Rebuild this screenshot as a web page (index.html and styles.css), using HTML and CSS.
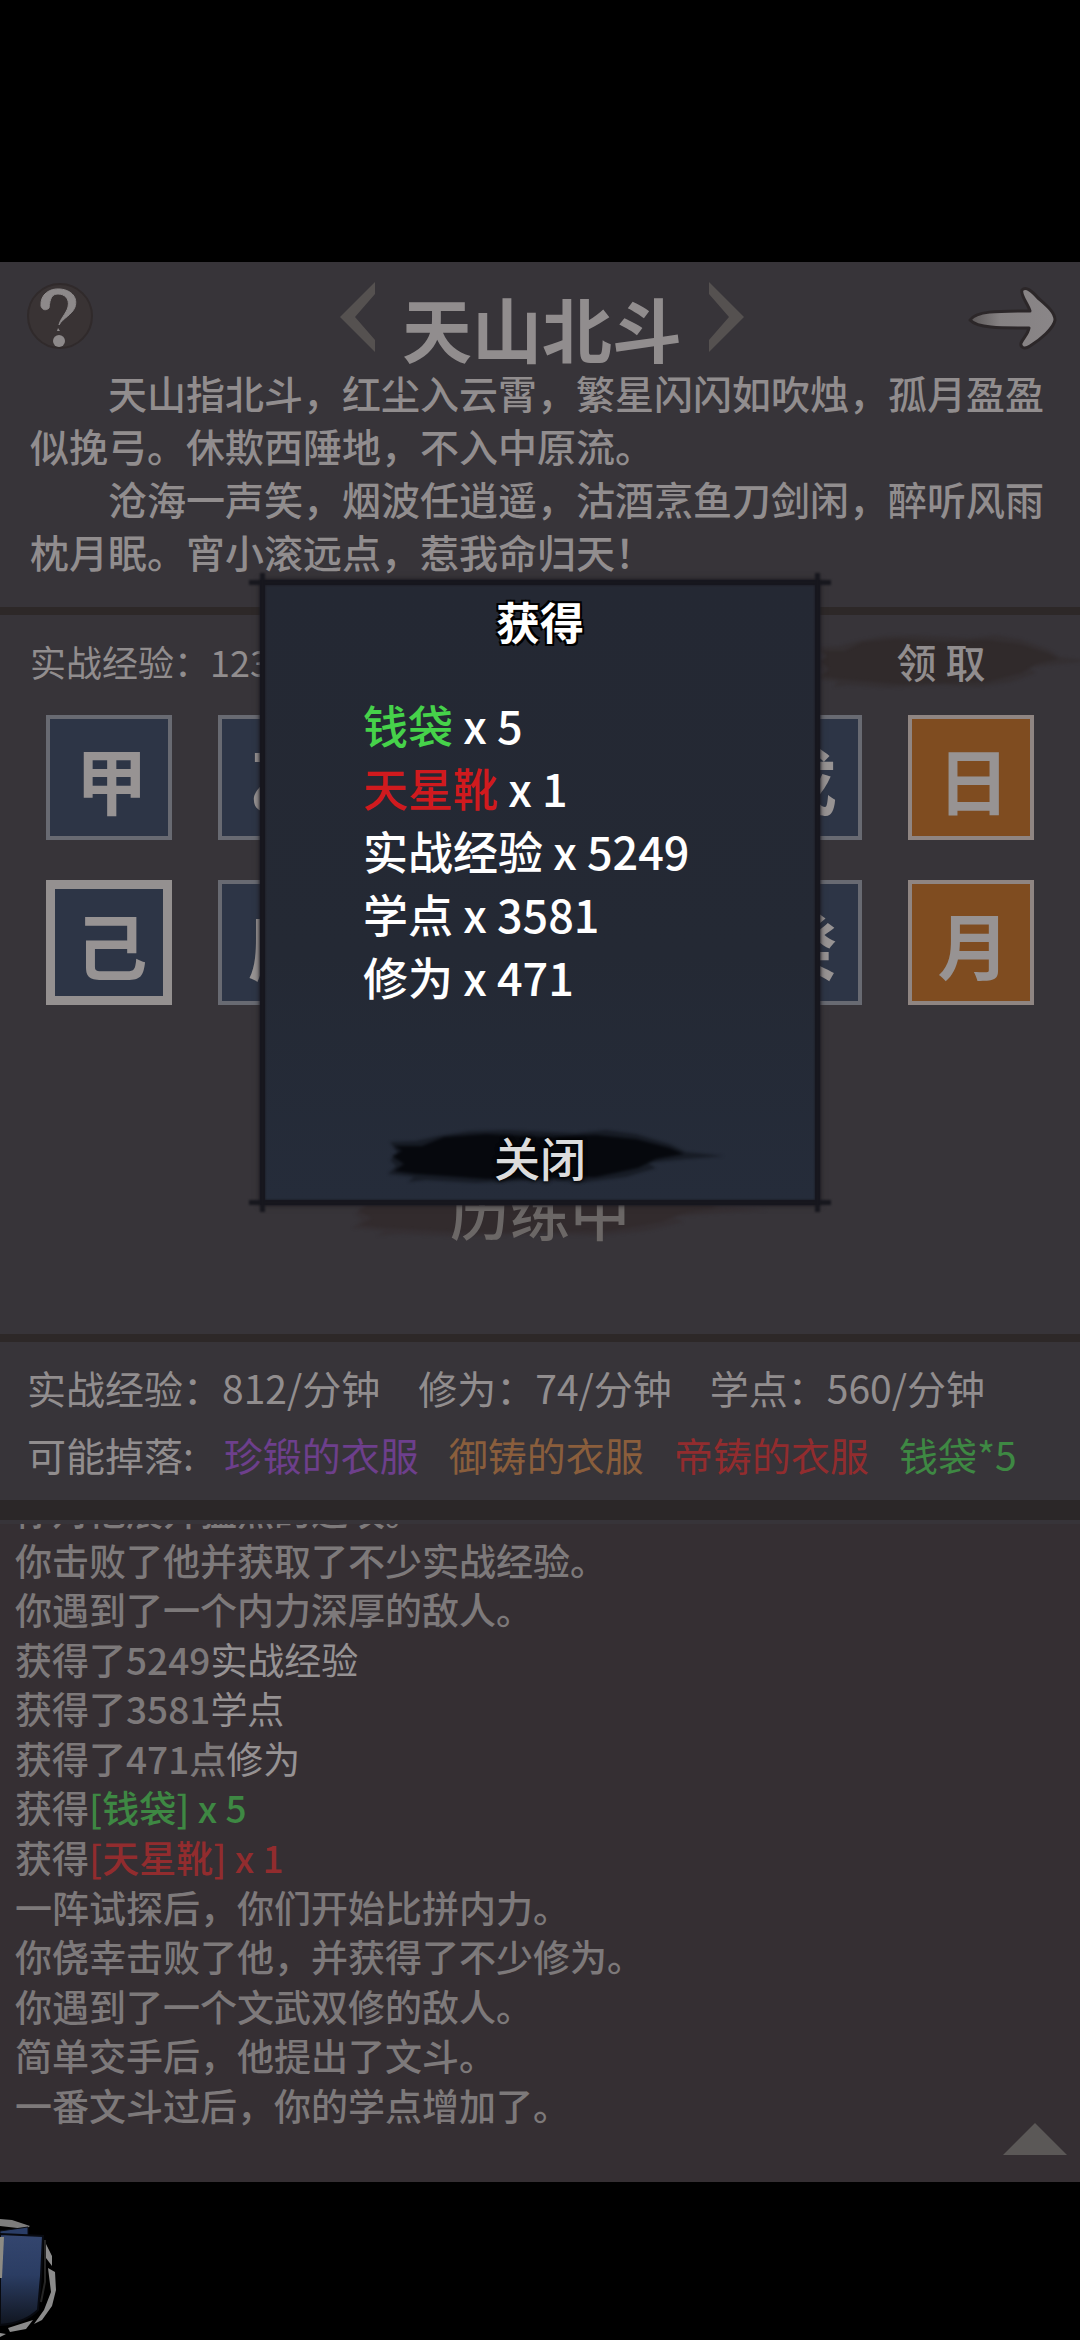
FILE: index.html
```html
<!DOCTYPE html>
<html lang="zh-CN">
<head>
<meta charset="utf-8">
<meta name="viewport" content="width=device-width, initial-scale=1">
<title>天山北斗</title>
<link rel="stylesheet" href="styles.css">
</head>
<body>
<svg class="defs" aria-hidden="true">
  <defs>
    <filter id="soft" x="-10%" y="-20%" width="120%" height="140%" color-interpolation-filters="sRGB"><feGaussianBlur stdDeviation="1.4"/></filter>
    <symbol id="brush" viewBox="-16 0 340 56" preserveAspectRatio="none" overflow="visible">
      <g filter="url(#soft)">
        <path opacity=".45" d="M4 14 L30 13 L52 8 L84 3 L120 2 L190 5 L220 2 L250 6 L284 16 L300 24 L338 28 L300 31 L262 35 L270 40 L240 49 L200 54 L150 52 L90 55 L40 52 L22 54 L28 49 L2 46 L10 38 L4 32 L12 26 Z"/>
        <path d="M8 18 L36 18 L58 9 L100 6 L160 9 L210 7 L250 11 L284 20 L298 26 L270 31 L252 40 L210 49 L160 50 L100 51 L60 48 L30 46 L8 43 L18 36 L6 28 L16 23 Z"/>
      </g>
    </symbol>
  </defs>
</svg>

<main class="game">
  <header class="intro">
    <div class="titlebar">
      <button class="icon-btn" aria-label="帮助">
        <svg width="68" height="68" viewBox="0 0 68 68"><circle cx="34" cy="34" r="32" fill="#393334" stroke="#302a2b" stroke-width="2"/><path d="M15 24 C14 12 24 6 34 7 C46 8 52 16 49 25 C46 33 37 36 33 43 C34 37 40 32 42 25 C44 16 38 12 32 12 C26 12 24 16 23 26 C20 29 16 28 15 24 Z" fill="#8d898a" stroke="#8d898a"/><path d="M32 46 l2 3 l-3 0 Z" fill="#8d898a"/><circle cx="33" cy="59" r="6" fill="#8d898a"/></svg>
      </button>
      <div class="place">
        <button class="icon-btn" aria-label="上一处"><svg width="36" height="70" viewBox="0 0 36 70"><path d="M35 0 V12 L15 35 L35 58 V70 L0 35 Z" fill="#555150"/></svg></button>
        <h1>天山北斗</h1>
        <button class="icon-btn" aria-label="下一处"><svg width="36" height="70" viewBox="0 0 36 70"><path d="M1 0 V12 L21 35 L1 58 V70 L36 35 Z" fill="#555150"/></svg></button>
      </div>
      <button class="icon-btn exit" aria-label="返回">
        <svg width="92" height="66" viewBox="0 0 92 66"><defs><linearGradient id="ag"><stop offset="0" stop-color="#5b5758"/><stop offset=".35" stop-color="#858182"/><stop offset="1" stop-color="#8a8688"/></linearGradient></defs><path d="M4 34 C10 25 30 25 64 25 C62 18 54 9 56 4 C60 0 66 5 72 12 C80 19 89 26 89 34 C88 42 74 54 64 60 C58 64 54 61 55 57 C58 51 62 48 63 42 C40 42 12 43 4 34 Z" fill="url(#ag)" stroke="#2c2729" stroke-width="3" stroke-linejoin="round"/></svg>
      </button>
    </div>
    <p>天山指北斗，红尘入云霄，繁星闪闪如吹烛，孤月盈盈似挽弓。休欺西陲地，不入中原流。</p>
    <p>沧海一声笑，烟波任逍遥，沽酒烹鱼刀剑闲，醉听风雨枕月眠。宵小滚远点，惹我命归天！</p>
  </header>

  <section class="training">
    <div class="earned">
      <span>实战经验：123</span>
      <button class="ink-btn claim"><svg class="ink"><use href="#brush"/></svg><span>领 取</span></button>
    </div>
    <div class="tiles">
      <button class="tile">甲</button>
      <button class="tile">乙</button>
      <button class="tile">丙</button>
      <button class="tile">丁</button>
      <button class="tile">戊</button>
      <button class="tile gold">日</button>
      <button class="tile selected">己</button>
      <button class="tile">庚</button>
      <button class="tile">辛</button>
      <button class="tile">壬</button>
      <button class="tile">癸</button>
      <button class="tile gold">月</button>
    </div>
    <button class="ink-btn status"><svg class="ink"><use href="#brush"/></svg><span>历练中</span></button>
  </section>

  <section class="rates">
    <div class="rate-row">
      <span>实战经验：812/分钟</span>
      <span>修为：74/分钟</span>
      <span>学点：560/分钟</span>
    </div>
    <div class="drop-row">
      <span>可能掉落:</span>
      <span class="purple">珍锻的衣服</span>
      <span class="orange">御铸的衣服</span>
      <span class="red">帝铸的衣服</span>
      <span class="green">钱袋*5</span>
    </div>
  </section>

  <section class="log">
    <ul>
      <li>你对他展开猛烈的进攻。</li>
      <li>你击败了他并获取了不少实战经验。</li>
      <li>你遇到了一个内力深厚的敌人。</li>
      <li>获得了5249<b>实战经验</b></li>
      <li>获得了3581<b>学点</b></li>
      <li>获得了471点<b>修为</b></li>
      <li>获得<span class="green">[钱袋] x 5</span></li>
      <li>获得<span class="red">[天星靴] x 1</span></li>
      <li>一阵试探后，你们开始比拼内力。</li>
      <li>你侥幸击败了他，并获得了不少修为。</li>
      <li>你遇到了一个文武双修的敌人。</li>
      <li>简单交手后，他提出了文斗。</li>
      <li>一番文斗过后，你的学点增加了。</li>
    </ul>
    <button class="icon-btn expand" aria-label="展开"><svg width="64" height="32" viewBox="0 0 64 32"><path d="M32 0 L64 32 H0 Z" fill="#5b5857"/></svg></button>
  </section>

  <div class="dialog" role="dialog" aria-labelledby="gain">
    <h2 id="gain">获得</h2>
    <ul>
      <li><span class="green">钱袋</span> x 5</li>
      <li><span class="red">天星靴</span> x 1</li>
      <li>实战经验 x 5249</li>
      <li>学点 x 3581</li>
      <li>修为 x 471</li>
    </ul>
    <button class="ink-btn close"><svg class="ink"><use href="#brush"/></svg><span>关闭</span></button>
  </div>
</main>

<footer class="dock">
  <button class="icon-btn" aria-label="书册">
    <svg width="62" height="124" viewBox="0 0 62 124">
      <defs><linearGradient id="book" x2="0" y2="1"><stop offset="0" stop-color="#34466f"/><stop offset=".45" stop-color="#2b3d63"/><stop offset="1" stop-color="#10151f"/></linearGradient></defs>
      <path d="M0 3 L12 4 L30 10 L26 13 L0 10 Z" fill="#7d7d7d"/>
      <path d="M46 28 L52 40 L52 50 L46 42 Z M48 52 L55 56 L56 74 L52 90 L42 104 L34 108 L44 94 L51 76 Z M33 104 L26 113 L10 116 L8 112 Z M0 117 L6 118 L0 121 Z" fill="#8b8b8b"/>
      <path d="M0 15 L28 11 V20 H0 Z" fill="#2a3d66" stroke="#0a0c12"/>
      <path d="M0 18 L43 20 L41 60 L38 94 C28 104 14 108 0 109 Z" fill="url(#book)" stroke="#080a10" stroke-width="2"/>
      <path d="M0 21 H4 L2 62 H0 Z" fill="#8d8b84"/>
      <path d="M45 24 L45 66 L41 86" fill="none" stroke="#262626" stroke-width="2"/>
    </svg>
  </button>
</footer>
</body>
</html>
```
FILE: styles.css
```css
* { box-sizing: border-box; }

body {
  margin: 0;
  min-height: 100vh;
  padding-top: 262px;
  background: #000;
  color: #918d8e;
  font-family: "Noto Sans CJK SC", sans-serif;
  font-size: 39px;
  display: flex;
  flex-direction: column;
}

h1, h2, p, ul { margin: 0; padding: 0; font-weight: 500; }
ul { list-style: none; }

button {
  margin: 0;
  padding: 0;
  border: 0;
  background: none;
  color: inherit;
  font: inherit;
}

svg { display: block; }
.defs { position: absolute; width: 0; height: 0; }

.purple { color: #6d3f8c; }
.orange { color: #8a5e3c; }
.red { color: #922c2e; }
.green { color: #3e8843; }

.game {
  position: relative;
  flex: 1;
  display: flex;
  flex-direction: column;
  overflow: hidden;
  background: #373439;
}

/* Title and verse */
.intro {
  padding: 20px 30px 29px;
  border-bottom: 8px solid #2d2828;
  line-height: 53px;
}
.intro p { text-indent: 2em; }
.titlebar {
  display: grid;
  grid-template-columns: 1fr auto 1fr;
  justify-items: start;
  align-items: start;
  height: 84px;
  margin: 0 -8px 0 -4px;
}
.titlebar .exit { justify-self: end; padding-top: 4px; }
.place { display: flex; align-items: flex-start; gap: 26px; }
.place h1 { font-size: 70px; font-weight: 700; line-height: 92px; }

/* Training slots */
.training {
  display: flex;
  flex-direction: column;
  padding: 18px 0 87px;
  border-bottom: 8px solid #2d2828;
}
.earned {
  display: flex;
  justify-content: space-between;
  align-items: center;
  padding: 0 0 0 30px;
  font-size: 36px;
  line-height: 54px;
}
.ink-btn { display: grid; place-items: center; font-weight: 500; }
.ink-btn > * { grid-area: 1 / 1; }
.ink { width: 100%; height: 56px; overflow: visible; }
.claim { width: 278px; font-size: 40px; fill: #302a2b; }

.tiles {
  display: grid;
  grid-template-columns: repeat(6, 126px);
  justify-content: space-between;
  row-gap: 40px;
  padding: 26px 46px 0;
}
.tile {
  height: 125px;
  padding-left: 5px;
  border: 4px solid #686a72;
  background: #2d3546;
  color: #979393;
  font-size: 72px;
  font-weight: 700;
  line-height: 112px;
}
.tile.gold { background: #7f4c20; border-color: #8f8582; }
.tile.selected { border: 9px solid #949090; line-height: 102px; }

.status {
  align-self: center;
  width: 420px;
  margin-top: 168px;
  color: #6b6766;
  font-size: 60px;
  line-height: 74px;
  fill: #322b2d;
}

/* Rates and possible drops */
.rates {
  padding: 12px 27px;
  border-bottom: 20px solid #2b2728;
  line-height: 67px;
}
.rate-row, .drop-row { display: flex; white-space: nowrap; }
.rate-row { gap: 38px; }
.drop-row { gap: 30px; }

/* Battle log */
.log {
  position: relative;
  flex: 1;
  display: flex;
  flex-direction: column;
  margin-top: 4px;
  padding: 0 15px 52px;
  overflow: hidden;
  background: #352f33;
  color: #7d797a;
  font-size: 37px;
  line-height: 49px;
}
.log ul {
  flex: 1;
  display: flex;
  flex-direction: column;
  justify-content: space-between;
  margin-top: -38px;
}
.log b { color: #969293; font-weight: 400; }
.expand { position: absolute; right: 13px; bottom: 27px; }

/* Reward dialog */
.dialog {
  position: absolute;
  top: 318px;
  left: 0;
  right: 0;
  margin: 0 auto;
  width: 560px;
  min-height: 625px;
  padding: 12px 0 16px;
  display: flex;
  flex-direction: column;
  border: 5px solid #17171e;
  background: linear-gradient(#242833, #242934 60%, #252c3a);
  box-shadow: 0 0 6px #1c1b20;
  color: #fff;
  font-size: 45px;
  line-height: 63px;
}
/* Border strokes that run past the corners */
.dialog::before, .dialog::after {
  content: "";
  position: absolute;
  filter: blur(1px);
  pointer-events: none;
}
.dialog::before { inset: -5px -16px; border: solid #17171e; border-width: 5px 0; }
.dialog::after { inset: -12px -5px; border: solid #17171e; border-width: 0 5px; }
.dialog h2 {
  font-size: 44px;
  font-weight: 700;
  line-height: 48px;
  text-align: center;
  text-shadow: 2px 2px 0 #000, -2px 2px 0 #000, 2px -2px 0 #000, -2px -2px 0 #000;
}
.dialog ul { padding: 48px 0 0 98px; }
.dialog .green { color: #46d24a; }
.dialog .red { color: #d01a1e; }
.close {
  align-self: center;
  width: 340px;
  margin-top: auto;
  color: #dcdcdc;
  font-size: 46px;
  line-height: 56px;
  fill: #06080d;
  text-shadow: 0 0 4px #000, 0 0 4px #000;
}

.dock { height: 158px; padding-top: 34px; }
```
